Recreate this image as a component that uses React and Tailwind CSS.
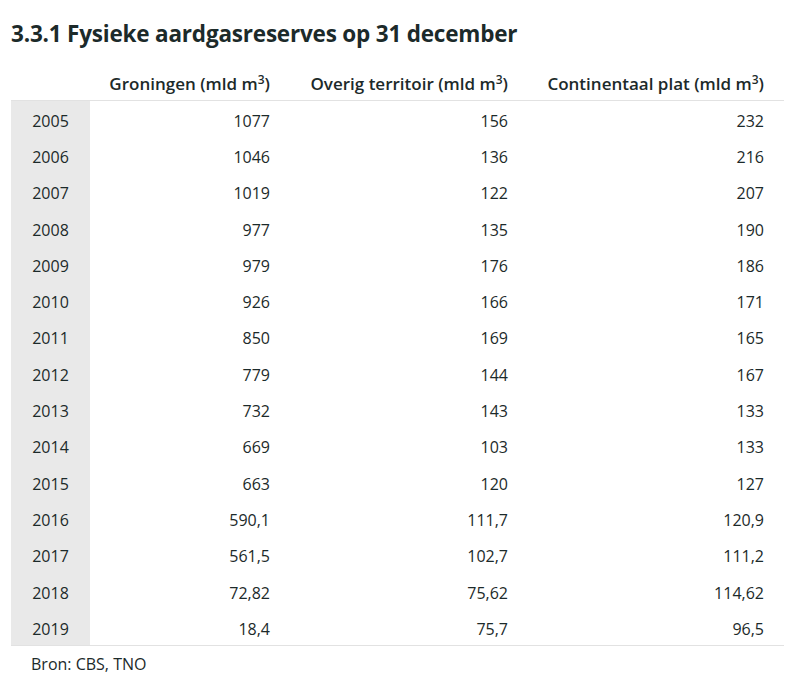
import React from 'react';

const rows = [
    ['2005', '1077', '156', '232'],
    ['2006', '1046', '136', '216'],
    ['2007', '1019', '122', '207'],
    ['2008', '977', '135', '190'],
    ['2009', '979', '176', '186'],
    ['2010', '926', '166', '171'],
    ['2011', '850', '169', '165'],
    ['2012', '779', '144', '167'],
    ['2013', '732', '143', '133'],
    ['2014', '669', '103', '133'],
    ['2015', '663', '120', '127'],
    ['2016', '590,1', '111,7', '120,9'],
    ['2017', '561,5', '102,7', '111,2'],
    ['2018', '72,82', '75,62', '114,62'],
    ['2019', '18,4', '75,7', '96,5'],
];

const Unit = () => (
    <span>
        (mld m<sup className="text-[12px]">3</sup>)
    </span>
);

const App = () => {
    return (
        <div className="w-[791px] h-[681px] bg-white text-[#1c2a2a] font-['Open_Sans',sans-serif]">
            <h1 className="pl-[11px] pt-[19px] text-[22.5px] leading-[30px] font-bold tracking-[-0.2px]">
                3.3.1 Fysieke aardgasreserves op 31 december
            </h1>

            <div className="ml-[11px] mt-[18px] w-[773px]">
                <div className="grid grid-cols-[79px_190px_238px_266px] h-[34px] items-center text-[17px] font-semibold border-b border-[#e2e2e2]">
                    <div></div>
                    <div className="text-right pr-[10px]">Groningen <Unit /></div>
                    <div className="text-right pr-[10px]">Overig territoir <Unit /></div>
                    <div className="text-right pr-[20px]">Continentaal plat <Unit /></div>
                </div>

                {rows.map(([year, gr, ov, cp]) => (
                    <div key={year} className="grid grid-cols-[79px_190px_238px_266px] h-[36.3px] items-stretch text-[16px]">
                        <div className="bg-[#e9e9e9] flex items-center justify-center pt-[3px]">{year}</div>
                        <div className="flex items-center justify-end pr-[10px] pt-[3px]">{gr}</div>
                        <div className="flex items-center justify-end pr-[10px] pt-[3px]">{ov}</div>
                        <div className="flex items-center justify-end pr-[20px] pt-[3px]">{cp}</div>
                    </div>
                ))}

                <div className="border-t border-[#e2e2e2] pl-[20px] pt-[6px] text-[16px]">
                    Bron: CBS, TNO
                </div>
            </div>
        </div>
    );
};

export default App;
